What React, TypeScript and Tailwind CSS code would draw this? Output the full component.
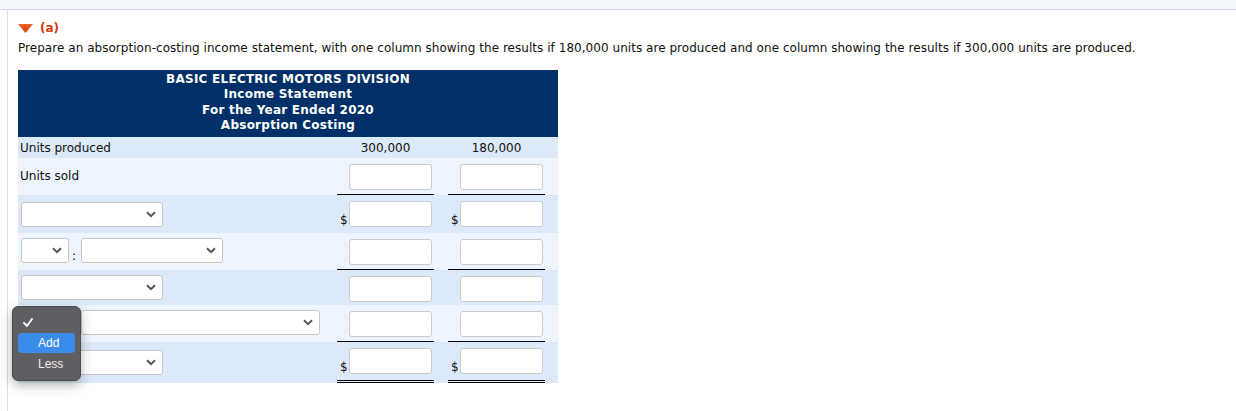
import React from 'react';

const font = { fontFamily: '"DejaVu Sans", Verdana, sans-serif' };

function Chevron() {
    return (
        <svg width="10" height="7" viewBox="0 0 10 7" className="shrink-0">
            <path d="M1 1.2l4 4 4-4" fill="none" stroke="#555" strokeWidth="2" />
        </svg>
    );
}

function FakeSelect({ w }: { w: string }) {
    return (
        <div className={`flex h-[25px] items-center justify-end rounded-[3px] border border-[#c6c6c6] bg-white pr-[6px] ${w}`}>
            <Chevron />
        </div>
    );
}

function Amount({ dollar, line }: { dollar?: boolean; line?: 'single' | 'double' }) {
    const border =
        line === 'single' ? 'border-b border-black' : line === 'double' ? 'border-b-[3px] border-double border-black' : '';
    return (
        <div className={`flex h-full w-[97px] items-start ${border}`}>
            <div className="flex items-end pt-[6px]">
                <span className="w-[12px] pb-[1px] pl-[3px] text-[12px] leading-none">{dollar ? '$' : ''}</span>
                <div className="h-[26px] w-[83px] rounded-[3px] border border-[#cccccc] bg-white" />
            </div>
        </div>
    );
}

type Row = {
    label: React.ReactNode;
    h: string;
    bg: string;
    dollar?: boolean;
    line?: 'single' | 'double';
};

export default function App() {
    const rows: Row[] = [
        { label: <span className="pl-[2px] pt-[11px]">Units sold</span>, h: 'h-[37px]', bg: 'bg-[#edf4fd]', line: 'single' },
        {
            label: (
                <div className="pl-[3px] pt-[7px]">
                    <FakeSelect w="w-[142px]" />
                </div>
            ),
            h: 'h-[38px]',
            bg: 'bg-[#dce9f8]',
            dollar: true,
        },
        {
            label: (
                <div className="flex items-end pl-[3px] pt-[5px]">
                    <FakeSelect w="w-[48px]" />
                    <span className="w-[12px] pl-[3px] text-[12px] leading-[14px]">:</span>
                    <FakeSelect w="w-[142px]" />
                </div>
            ),
            h: 'h-[37px]',
            bg: 'bg-[#edf4fd]',
            line: 'single',
        },
        {
            label: (
                <div className="pl-[3px] pt-[5px]">
                    <FakeSelect w="w-[142px]" />
                </div>
            ),
            h: 'h-[35px]',
            bg: 'bg-[#dce9f8]',
        },
        {
            label: (
                <div className="pl-[63px] pt-[5px]">
                    <FakeSelect w="w-[239px]" />
                </div>
            ),
            h: 'h-[37px]',
            bg: 'bg-[#edf4fd]',
            line: 'single',
        },
        {
            label: (
                <div className="pl-[3px] pt-[8px]">
                    <FakeSelect w="w-[142px]" />
                </div>
            ),
            h: 'h-[41px]',
            bg: 'bg-[#dce9f8]',
            dollar: true,
            line: 'double',
        },
    ];

    return (
        <div className="relative h-[411px] w-[1236px] overflow-hidden bg-white text-[12px] text-[#111]" style={font}>
            <div className="h-[10px] border-b border-[#cdd6e1] bg-[#f4f7fb]" />
            <div className="ml-[7px] h-[401px] border-l border-[#d6dee8] pl-[10px] pt-[10px]">
                <div className="flex h-[16px] items-center gap-[7px] leading-[16px]">
                    <svg width="15" height="9" viewBox="0 0 15 9">
                        <defs>
                            <linearGradient id="tri" x1="0" y1="0" x2="0" y2="1">
                                <stop offset="0" stopColor="#f0642a" />
                                <stop offset="1" stopColor="#d8380c" />
                            </linearGradient>
                        </defs>
                        <path d="M0 0h15L7.5 9z" fill="url(#tri)" />
                    </svg>
                    <span className="font-bold text-[#d13b0c]">(a)</span>
                </div>
                <p className="mt-[4px] leading-[16px] tracking-[0.04px]">
                    Prepare an absorption-costing income statement, with one column showing the results if 180,000 units are produced and one column showing the results if 300,000 units are produced.
                </p>

                <div className="mt-[14px] w-[540px]">
                    <div className="h-[67px] bg-[#003067] pt-[2px] text-center font-bold leading-[15.4px] tracking-[0.25px] text-white">
                        <div>BASIC ELECTRIC MOTORS DIVISION</div>
                        <div>Income Statement</div>
                        <div>For the Year Ended 2020</div>
                        <div>Absorption Costing</div>
                    </div>
                    <div className="flex h-[21px] items-center bg-[#dce9f8] pt-[1px] leading-[15px]">
                        <div className="w-[319px] pl-[2px]">Units produced</div>
                        <div className="w-[97px] text-center">300,000</div>
                        <div className="w-[14px]" />
                        <div className="w-[97px] text-center">180,000</div>
                    </div>
                    {rows.map((r, i) => (
                        <div key={i} className={`flex ${r.h} ${r.bg} leading-[15px]`}>
                            <div className="flex w-[319px] items-start">{r.label}</div>
                            <Amount dollar={r.dollar} line={r.line} />
                            <div className="w-[14px]" />
                            <Amount dollar={r.dollar} line={r.line} />
                        </div>
                    ))}
                </div>
            </div>

            <div
                className="absolute left-[12px] top-[306px] h-[75px] w-[69px] rounded-[6px] border border-[#4a4a4d] bg-[#5f5f63] px-[5px] pt-[11px] shadow-[0_4px_12px_rgba(0,0,0,0.3)]"
                style={{ fontFamily: '"Liberation Sans", Arial, sans-serif' }}
            >
                <svg width="10" height="9" viewBox="0 0 10 9" className="ml-[5px] block">
                    <path d="M1 5l3 3 5-7" fill="none" stroke="#fff" strokeWidth="1.8" strokeLinecap="round" strokeLinejoin="round" />
                </svg>
                <div className="mt-[6px] flex h-[20px] items-center rounded-[4px] bg-[#3b8cea] pl-[20px] text-[12px] text-white">Add</div>
                <div className="flex h-[22px] items-center pl-[20px] text-[12px] text-[#ececec]">Less</div>
            </div>
        </div>
    );
}
